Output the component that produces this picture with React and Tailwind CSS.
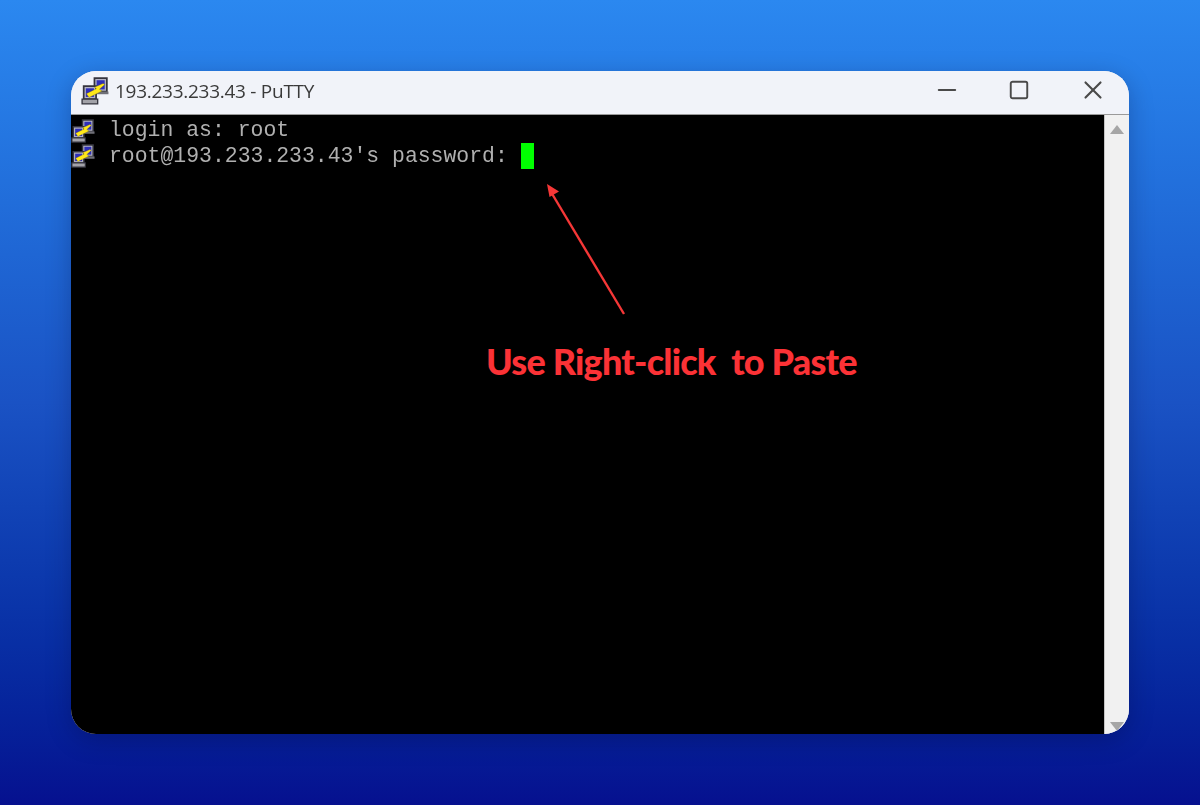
import { X, Minus, Square } from 'lucide-react';

const PuttyIcon = ({ size = 26 }) => (
  <svg width={size} height={size} viewBox="0 0 26 26" aria-hidden="true" className="shrink-0 blur-[0.4px]">
    {/* back monitor */}
    <path d="M12.5 1h11.5v12.5H12.5z" fill="#b4b4c4" stroke="#34343e" strokeWidth="1.6" />
    <path d="M14.5 3h7.5v8.5h-7.5z" fill="#2f2fb8" />
    <path d="M11.5 13.5h14v2.5h-14z" fill="#6f6f77" />
    {/* front monitor */}
    <path d="M2.5 8.5h11.5v12H2.5z" fill="#b4b4c4" stroke="#34343e" strokeWidth="1.6" />
    <path d="M4.5 10.5h7.5v8h-7.5z" fill="#2f2fb8" />
    <path d="M1 20.5h14.5v4.5H1z" fill="#a2a2a8" stroke="#34343e" strokeWidth="1.2" />
    {/* lightning */}
    <path d="M20.5 6l-8 3.5 1.8 1.3L5 15.5l2.5 3.5 12-6-2.4-1.6 5-4.5z" fill="#ffe81a" stroke="#6e6410" strokeWidth="0.3" />
  </svg>
);

const TerminalLine = ({ children }) => (
  <div className="flex items-center h-[25px]">
    <div className="w-[38px] shrink-0">
      <PuttyIcon size={24} />
    </div>
    <span className="font-['Liberation_Mono',monospace] text-[21.45px] leading-[25px] text-[#b0b0b0] whitespace-pre blur-[0.5px]">
      {children}
    </span>
  </div>
);

export default function App() {
  return (
    <div className="w-[1200px] h-[805px] overflow-hidden flex flex-col pt-[71px] px-[71px] bg-gradient-to-b from-[#2b88f0] via-[#1a52c4] to-[#06108f]">
      <div className="relative w-[1058px] h-[663px] flex flex-col rounded-[25px] overflow-hidden bg-[#f2f2f2] shadow-[0_6px_24px_rgba(0,0,40,0.25)]">
        {/* title bar */}
        <div className="h-[44px] shrink-0 flex items-center bg-[#f1f3f9] border-b border-[#9a9a9a]">
          <div className="ml-[10px] w-[34px] -mt-[3px]">
            <PuttyIcon size={28} />
          </div>
          <span className="-mt-[3px] font-['Open_Sans',sans-serif] text-[19px] text-[#3a3a3a] tracking-[-0.27px] blur-[0.3px]">193.233.233.43 - PuTTY</span>
          <div className="ml-auto -mr-px -mt-[5px] flex items-center text-[#4a4a4a]">
            <div className="w-[70px] flex justify-center">
              <Minus size={28} strokeWidth={1.8} />
            </div>
            <div className="w-[74px] flex justify-center">
              <Square size={22} strokeWidth={2.1} />
            </div>
            <div className="w-[74px] flex justify-center">
              <X size={30} strokeWidth={1.7} />
            </div>
          </div>
        </div>

        <div className="flex-1 flex min-h-0">
          {/* terminal */}
          <div className="flex-1 bg-black pt-[3px]">
            <TerminalLine>login as: root</TerminalLine>
            <TerminalLine>
              root@193.233.233.43's password: <span className="inline-block align-middle w-[13px] h-[26px] bg-[#00ff00]" />
            </TerminalLine>
          </div>
          {/* scrollbar */}
          <div className="w-[25px] shrink-0 flex flex-col items-center justify-between pt-[10px] pb-[3px] bg-[#f1f1f1] border-l border-[#c4c4c4]">
            <div className="w-0 h-0 border-x-[7px] border-x-transparent border-b-[9px] border-b-[#a6a6a6]" />
            <div className="w-0 h-0 border-x-[7px] border-x-transparent border-t-[9px] border-t-[#a6a6a6]" />
          </div>
        </div>

        {/* annotation over the terminal */}
        <svg className="absolute left-[465px] top-[104px]" width="100" height="150" viewBox="0 0 100 150" aria-hidden="true">
          <path d="M88 139L15 17" stroke="#f53737" strokeWidth="2.4" fill="none" />
          <path d="M11 9l12 7.5-9.5 5.5z" fill="#f53737" />
        </svg>
        <span className="absolute left-[415px] top-[268px] font-['Lato',sans-serif] font-black text-[36px] leading-[44px] tracking-[-0.8px] text-[#fb3236] whitespace-pre">
          Use Right-click  to Paste
        </span>
      </div>
    </div>
  );
}
